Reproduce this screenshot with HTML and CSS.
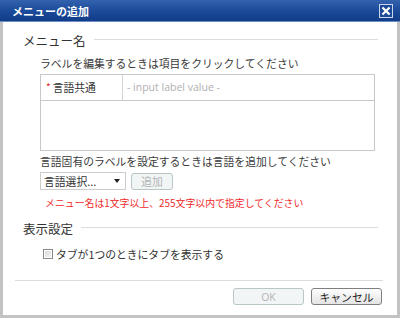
FILE: index.html
```html
<!DOCTYPE html>
<html lang="ja">
<head>
<meta charset="utf-8">
<link rel="stylesheet" href="styles.css">
</head>
<body>
<div class="dialog">
  <div class="titlebar">
    <span class="title">メニューの追加</span>
    <span class="close">
      <svg width="14" height="14" viewBox="0 0 14 14">
        <rect x="0.5" y="0.5" width="13" height="13" fill="#1d4a98" stroke="#c9d6ee"/>
        <path d="M4.2 4.2 L9.8 9.8 M9.8 4.2 L4.2 9.8" stroke="#fff" stroke-width="2.2" stroke-linecap="square"/>
      </svg>
    </span>
  </div>
  <div class="body">
    <div class="content">
      <div class="legend"><span class="legend-text">メニュー名</span><span class="legend-line"></span></div>
      <div class="indent">
        <div class="desc first">ラベルを編集するときは項目をクリックしてください</div>
        <div class="grid">
          <div class="grid-head">
            <div class="cell-lang"><span class="req">*</span>言語共通</div>
            <div class="cell-value">- input label value -</div>
          </div>
          <div class="grid-rest"></div>
        </div>
        <div class="desc second">言語固有のラベルを設定するときは言語を追加してください</div>
        <div class="lang-row">
          <div class="select"><span>言語選択...</span><span class="arrow"></span></div>
          <button class="btn small disabled">追加</button>
        </div>
        <div class="error">メニュー名は1文字以上、255文字以内で指定してください</div>
      </div>
      <div class="legend second-legend"><span class="legend-text">表示設定</span><span class="legend-line"></span></div>
      <div class="indent">
        <label class="check-row"><span class="checkbox"></span>タブが1つのときにタブを表示する</label>
      </div>
    </div>
    <div class="footer">
      <button class="btn wide disabled">OK</button>
      <button class="btn wide">キャンセル</button>
    </div>
  </div>
</div>
</body>
</html>
```

FILE: styles.css
```css
* { box-sizing: border-box; }
html, body { margin: 0; padding: 0; }
body {
  width: 400px;
  height: 318px;
  overflow: hidden;
  font-family: "Noto Sans", "Noto Sans CJK JP", sans-serif;
  color: #333;
  background: #c6c6c6;
}
.dialog {
  width: 400px;
  height: 318px;
  display: flex;
  flex-direction: column;
  background: #c3c3c3;
}
.titlebar {
  height: 22px;
  flex: none;
  display: flex;
  align-items: center;
  justify-content: space-between;
  padding: 0 7px 0 12px;
  background: linear-gradient(#3462ae 0%, #1d4d9c 45%, #113c88 100%);
  border-bottom: 1px solid #6d8cc4;
}
.title {
  color: #fff;
  font-weight: bold;
  font-size: 11px;
  line-height: 16px;
  font-family: "Noto Sans CJK JP", sans-serif;
}
.close { display: flex; margin-top: 1px; }
.body {
  flex: 1;
  margin: 0 3px 3px;
  background: #fff;
  display: flex;
  flex-direction: column;
}
.content {
  padding: 11px 19px 0 20px;
  font-family: "Noto Sans CJK JP", sans-serif;
}
.legend {
  display: flex;
  align-items: center;
  height: 16px;
}
.legend-text {
  font-size: 12.5px;
  line-height: 16px;
  color: #333;
}
.legend-line {
  flex: 1;
  height: 1px;
  background: #dcdcdc;
  margin-left: 8px;
  margin-top: -3px;
}
.indent { margin-left: 17px; margin-right: 3px; }
.desc {
  font-size: 10.8px;
  line-height: 16px;
  color: #3a3a3a;
  white-space: nowrap;
}
.desc.first { margin-top: 6px; }
.desc.second { margin-top: 2px; }
.grid {
  margin-top: 3px;
  height: 77px;
  border: 1px solid #c8c8c8;
  display: flex;
  flex-direction: column;
}
.grid-head {
  height: 26px;
  display: flex;
  border-bottom: 1px solid #c8c8c8;
}
.cell-lang {
  width: 82px;
  border-right: 1px solid #d4d4d4;
  font-size: 10.8px;
  line-height: 25px;
  padding-left: 5px;
  color: #333;
}
.req {
  color: #e52020;
  font-size: 10px;
  margin-right: 2px;
  position: relative;
  top: -1px;
}
.cell-value {
  flex: 1;
  font-family: "Open Sans", sans-serif;
  font-size: 10.5px;
  line-height: 25px;
  padding-left: 4px;
  color: #b0b0b0;
}
.grid-rest { flex: 1; }
.lang-row {
  margin-top: 3px;
  display: flex;
  align-items: center;
  height: 18px;
}
.select {
  width: 86px;
  height: 18px;
  border: 1px solid #cdcdcd;
  display: flex;
  align-items: center;
  justify-content: space-between;
  padding: 0 5px 0 3px;
  font-size: 10.8px;
  color: #333;
}
.arrow {
  width: 0; height: 0;
  border-left: 3px solid transparent;
  border-right: 3px solid transparent;
  border-top: 4px solid #222;
}
.btn {
  font-family: "Noto Sans CJK JP", sans-serif;
  border: 1px solid #7f7f7f;
  border-radius: 3px;
  background: linear-gradient(#fdfdfd, #e4e4e4);
  color: #222;
  padding: 0;
  font-size: 10.8px;
  line-height: 14px;
}
.btn.small {
  width: 42px;
  height: 17px;
  margin-left: 5px;
}
.btn.wide {
  width: 71px;
  height: 17px;
}
.btn.disabled {
  border-color: #b8c6c6;
  background: #f1f5f5;
  color: #b4b4b4;
}
.footer .btn.disabled { font-family: "Open Sans", sans-serif; font-size: 10.5px; }
.error {
  margin-top: 5px;
  margin-left: 5px;
  font-size: 9.9px;
  line-height: 16px;
  color: #f02a2a;
  white-space: nowrap;
}
.second-legend { margin-top: 10px; }
.check-row {
  margin-top: 9px;
  margin-left: 3px;
  display: flex;
  align-items: center;
  height: 16px;
  font-size: 10.8px;
  color: #333;
}
.checkbox {
  width: 10px;
  height: 10px;
  border: 1px solid #8a8a8a;
  background: linear-gradient(135deg, #d8d8d8, #f4f4f4);
  box-shadow: inset 0 0 0 1px #fff;
  margin-right: 3px;
}
.footer {
  margin: auto 14px 10px 12px;
  border-top: 1px solid #dcdcdc;
  padding: 7px 1px 0 0;
  display: flex;
  justify-content: flex-end;
  gap: 7px;
}
```
